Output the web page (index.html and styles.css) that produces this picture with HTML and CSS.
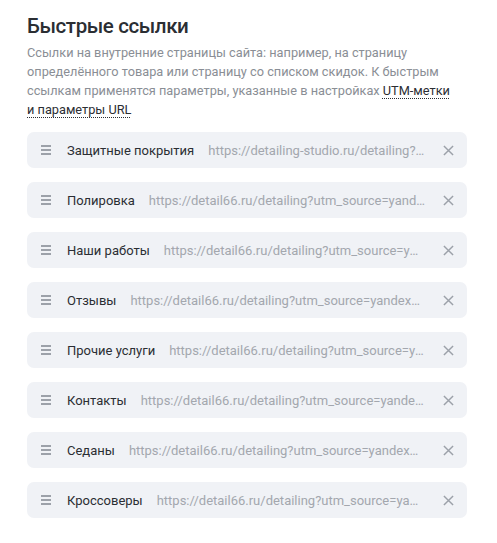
FILE: index.html
```html
<!DOCTYPE html>
<html lang="ru">
<head>
<meta charset="utf-8">
<link rel="stylesheet" href="styles.css">
</head>
<body>
<div class="page">
  <h1 class="title">Быстрые ссылки</h1>
  <p class="desc">Ссылки на внутренние страницы сайта: например, на страницу определённого товара или страницу со списком скидок. К быстрым ссылкам применятся параметры, указанные в настройках <a class="link">UTM-метки</a> <a class="link nowrap">и параметры URL</a></p>
  <ul class="list">
    <li class="row"><span class="drag"><i></i><i></i><i></i></span><span class="name">Защитные покрытия</span><span class="url">https://detailing-studio.ru/detailing?utm_source=yandex&amp;utm_medium=cpc</span><span class="close"><svg viewBox="0 0 12 12"><path d="M1 1L11 11M11 1L1 11"/></svg></span></li>
    <li class="row"><span class="drag"><i></i><i></i><i></i></span><span class="name">Полировка</span><span class="url">https://detail66.ru/detailing?utm_source=yandex&amp;utm_medium=cpc</span><span class="close"><svg viewBox="0 0 12 12"><path d="M1 1L11 11M11 1L1 11"/></svg></span></li>
    <li class="row"><span class="drag"><i></i><i></i><i></i></span><span class="name">Наши работы</span><span class="url">https://detail66.ru/detailing?utm_source=yandex&amp;utm_medium=cpc</span><span class="close"><svg viewBox="0 0 12 12"><path d="M1 1L11 11M11 1L1 11"/></svg></span></li>
    <li class="row"><span class="drag"><i></i><i></i><i></i></span><span class="name">Отзывы</span><span class="url">https://detail66.ru/detailing?utm_source=yandex&amp;utm_medium=cpc</span><span class="close"><svg viewBox="0 0 12 12"><path d="M1 1L11 11M11 1L1 11"/></svg></span></li>
    <li class="row"><span class="drag"><i></i><i></i><i></i></span><span class="name">Прочие услуги</span><span class="url">https://detail66.ru/detailing?utm_source=yandex&amp;utm_medium=cpc</span><span class="close"><svg viewBox="0 0 12 12"><path d="M1 1L11 11M11 1L1 11"/></svg></span></li>
    <li class="row"><span class="drag"><i></i><i></i><i></i></span><span class="name">Контакты</span><span class="url">https://detail66.ru/detailing?utm_source=yandex&amp;utm_medium=cpc</span><span class="close"><svg viewBox="0 0 12 12"><path d="M1 1L11 11M11 1L1 11"/></svg></span></li>
    <li class="row"><span class="drag"><i></i><i></i><i></i></span><span class="name">Седаны</span><span class="url">https://detail66.ru/detailing?utm_source=yandex&amp;utm_medium=cpc</span><span class="close"><svg viewBox="0 0 12 12"><path d="M1 1L11 11M11 1L1 11"/></svg></span></li>
    <li class="row"><span class="drag"><i></i><i></i><i></i></span><span class="name">Кроссоверы</span><span class="url">https://detail66.ru/detailing?utm_source=yandex&amp;utm_medium=cpc</span><span class="close"><svg viewBox="0 0 12 12"><path d="M1 1L11 11M11 1L1 11"/></svg></span></li>
  </ul>
</div>
</body>
</html>
```
FILE: styles.css
```css
* { box-sizing: border-box; }
html, body { margin: 0; padding: 0; background: #fff; }
body { font-family: Roboto, "Noto Sans", sans-serif; color: #2b2e33; }
.page { width: 497px; padding: 12px 30px 0 27px; }
.title { margin: 0; font-size: 20.5px; line-height: 28px; font-weight: 500; color: #2b2e33; letter-spacing: -0.4px; }
.desc { margin: 3px 0 0; font-size: 12.75px; line-height: 19px; color: #8a8e95; }
.link { color: #2b2e33; text-decoration: underline dotted #2b2e33; text-decoration-thickness: 1px; text-underline-offset: 3px; }
.nowrap { white-space: nowrap; }
.list { list-style: none; margin: 13px 0 0; padding: 0; display: flex; flex-direction: column; gap: 14px; }
.row { height: 36px; background: #f0f2f6; border-radius: 7px; display: flex; align-items: center; padding: 0 13px 0 14px; font-size: 13px; }
.drag { width: 10px; display: flex; flex-direction: column; gap: 2.5px; flex: none; }
.drag i { display: block; height: 1.5px; background: #9ca1a9; }
.name { margin-left: 16px; color: #2b2e33; white-space: nowrap; flex: none; }
.url { margin-left: 14px; color: #a3a7ae; white-space: nowrap; overflow: hidden; text-overflow: ellipsis; flex: 1; min-width: 0; }
.close { margin-left: 18px; width: 11px; height: 11px; flex: none; display: flex; }
.close svg { width: 11px; height: 11px; fill: none; stroke: #9ca1a9; stroke-width: 1.6; }
```
